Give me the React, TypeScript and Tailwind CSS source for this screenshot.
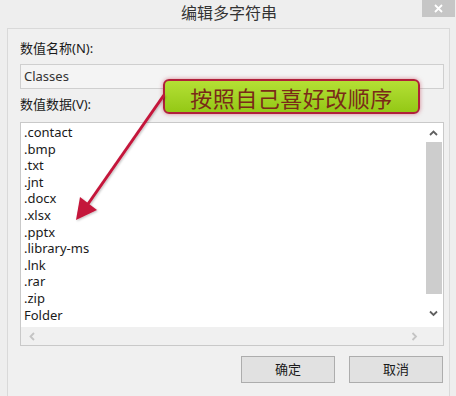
const items = [
  ".contact",
  ".bmp",
  ".txt",
  ".jnt",
  ".docx",
  ".xlsx",
  ".pptx",
  ".library-ms",
  ".lnk",
  ".rar",
  ".zip",
  "Folder",
];

function Chevron({ dir }: { dir: "up" | "down" | "left" | "right" }) {
  const d = {
    up: "M1 5 L4.5 1.5 L8 5",
    down: "M1 1.5 L4.5 5 L8 1.5",
    left: "M5 1 L1.5 4.5 L5 8",
    right: "M1.5 1 L5 4.5 L1.5 8",
  }[dir];
  const vertical = dir === "up" || dir === "down";
  return (
    <svg width={vertical ? 9 : 7} height={vertical ? 7 : 9} viewBox={vertical ? "0 0 9 7" : "0 0 7 9"}>
      <path d={d} fill="none" stroke={vertical ? "#606060" : "#c4c4c4"} strokeWidth="1.8" />
    </svg>
  );
}

export default function App() {
  return (
    <div className="relative w-[456px] h-[396px] overflow-hidden bg-[#eeeeee] font-['Noto_Sans','Noto_Sans_CJK_SC',sans-serif] text-[#1a1a1a]">
      {/* title bar */}
      <div className="grid grid-cols-[1fr_auto_1fr] h-[28px]">
        <div />
        <div className="pt-[3px] text-[16px] leading-[20px] text-[#333] pl-[2px]">编辑多字符串</div>
        <div className="flex justify-end pr-[1px]">
          <div className="w-[33px] h-[17px] bg-[#c6c6c6] flex items-center justify-center">
            <svg width="9" height="9" viewBox="0 0 9 9">
              <path d="M1 1 L8 8 M8 1 L1 8" stroke="#fff" strokeWidth="1.8" />
            </svg>
          </div>
        </div>
      </div>

      {/* panel */}
      <div className="ml-[7px] mr-[6px] h-[368px] border-l border-t border-r border-[#d9d9d9] bg-[#f0f0f0] pl-[12px] pr-[5px] pt-[11px] flex flex-col">
        <div className="text-[13px] leading-[17px]">数值名称(N):</div>
        <div className="mt-[7px] h-[25px] border border-[#cfcfcf] bg-[#f4f4f4] pl-[3px] flex items-center text-[13px] text-[#333]">
          Classes
        </div>
        <div className="mt-[7px] text-[13px] leading-[17px]">数值数据(V):</div>

        <div className="mt-[9px] h-[224px] border border-[#c9c9c9] flex flex-col bg-white">
          <div className="flex flex-1 min-h-0">
            <div className="flex-1 pl-[3px] pt-[1px] text-[13px] leading-[16.6px]">
              {items.map((t) => (
                <div key={t}>{t}</div>
              ))}
            </div>
            <div className="w-[17px] flex flex-col items-center mr-[1px]">
              <div className="h-[19px] flex items-center justify-center pt-[2px]">
                <Chevron dir="up" />
              </div>
              <div className="w-[16px] h-[152px] bg-[#cdcdcd]" />
              <div className="flex-1 flex items-center justify-center pt-[6px]">
                <Chevron dir="down" />
              </div>
            </div>
          </div>
          <div className="h-[18px] bg-[#f0f0f0] flex items-center justify-between px-[8px] pr-[25px]">
            <Chevron dir="left" />
            <Chevron dir="right" />
          </div>
        </div>

        <div className="mt-[10px] flex justify-end gap-[14px] pr-[1px]">
          <button className="w-[94px] h-[27px] border border-[#adadad] bg-[#e1e1e1] text-[13px] text-[#1a1a1a]">
            确定
          </button>
          <button className="w-[94px] h-[27px] border border-[#adadad] bg-[#e1e1e1] text-[13px] text-[#1a1a1a]">
            取消
          </button>
        </div>
      </div>

      {/* annotation callout */}
      <div className="absolute left-[163px] top-[79px] w-[257px] h-[35px] rounded-[6px] border-2 border-[#b0203a] bg-gradient-to-b from-[#b4e034] to-[#94c814] shadow-[0_0_4px_rgba(190,40,70,0.55)] flex items-center justify-center">
        <span className="text-[22px] leading-[26px] tracking-[0.5px] text-[#7a2a18] font-['Noto_Sans_CJK_SC',sans-serif]">
          按照自己喜好改顺序
        </span>
      </div>

      {/* arrow */}
      <svg className="absolute inset-0 pointer-events-none" width="456" height="396">
        <defs>
          <filter id="sh" x="-20%" y="-20%" width="140%" height="140%">
            <feDropShadow dx="1" dy="1" stdDeviation="1" floodColor="#000" floodOpacity="0.25" />
          </filter>
        </defs>
        <g filter="url(#sh)">
          <line x1="164" y1="95" x2="88" y2="204" stroke="#c4173b" strokeWidth="3" />
          <polygon points="76,220 80,197 97,210" fill="#c4173b" />
        </g>
      </svg>
    </div>
  );
}
